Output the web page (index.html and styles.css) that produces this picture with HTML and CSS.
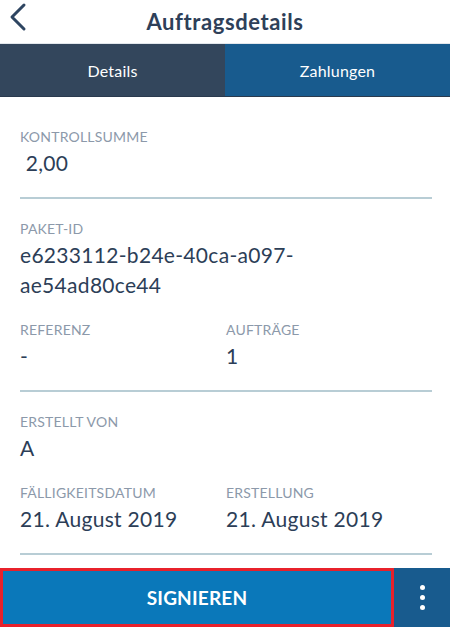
FILE: index.html
```html
<!DOCTYPE html>
<html lang="de">

<head>
    <meta charset="UTF-8">
    <title>Auftragsdetails</title>
    <link rel="stylesheet" href="styles.css">
</head>

<body>

    <div class="screen">

        <header class="topbar">
            <button class="back" aria-label="Zurück">
                <svg width="30" height="34" viewBox="0 0 30 34">
                    <path d="M24 5 L12 17 L24 29" fill="none" stroke="#2e4561" stroke-width="3"
                        stroke-linecap="round" stroke-linejoin="round" />
                </svg>
            </button>
            <h1>Auftragsdetails</h1>
        </header>

        <nav class="tabs">
            <div class="tab active">Details</div>
            <div class="tab">Zahlungen</div>
        </nav>

        <main class="content">

            <section class="section first">
                <div class="field">
                    <div class="label">Kontrollsumme</div>
                    <div class="value">&nbsp;2,00</div>
                </div>
            </section>

            <section class="section">
                <div class="grid">
                    <div class="field wide">
                        <div class="label">Paket-ID</div>
                        <div class="value">e6233112-b24e-40ca-a097-<br>ae54ad80ce44</div>
                    </div>
                    <div class="field">
                        <div class="label">Referenz</div>
                        <div class="value">-</div>
                    </div>
                    <div class="field">
                        <div class="label">Aufträge</div>
                        <div class="value">1</div>
                    </div>
                </div>
            </section>

            <section class="section">
                <div class="grid">
                    <div class="field wide">
                        <div class="label">Erstellt von</div>
                        <div class="value">A</div>
                    </div>
                    <div class="field">
                        <div class="label">Fälligkeitsdatum</div>
                        <div class="value">21. August 2019</div>
                    </div>
                    <div class="field">
                        <div class="label">Erstellung</div>
                        <div class="value">21. August 2019</div>
                    </div>
                </div>
            </section>

        </main>

        <footer class="actions">
            <button class="sign">SIGNIEREN</button>
            <button class="more" aria-label="Mehr">
                <span class="dot"></span>
                <span class="dot"></span>
                <span class="dot"></span>
            </button>
        </footer>

    </div>

</body>

</html>
```

FILE: styles.css
```css
* {
    box-sizing: border-box;
}

html,
body {
    margin: 0;
    height: 100%;
}

body {
    font-family: Lato, 'Noto Sans', sans-serif;
    background-color: #ffffff;
    color: #2c3e57;
}

.screen {
    display: flex;
    flex-direction: column;
    height: 100vh;
}

.topbar {
    position: relative;
    height: 44px;
    display: flex;
    align-items: center;
    justify-content: center;
    border-bottom: 1px solid #e3e7ec;
}

.topbar h1 {
    margin: 0;
    font-size: 22px;
    font-weight: 700;
    letter-spacing: 0.6px;
    color: #2e4059;
    line-height: 30px;
}

.back {
    position: absolute;
    left: 0;
    top: 0;
    padding: 0;
    border: none;
    background: none;
    cursor: pointer;
}

.back svg {
    display: block;
}

.tabs {
    display: flex;
    height: 53px;
    border-bottom: 1px solid #2a3a4e;
}

.tab {
    flex: 1;
    display: flex;
    align-items: center;
    justify-content: center;
    font-size: 16px;
    letter-spacing: 0.2px;
    color: #ffffff;
    background-color: #185b8e;
}

.tab.active {
    background-color: #33465c;
}

.content {
    flex: 1;
    overflow: hidden;
    padding: 0 18px 0 20px;
}

.section {
    padding: 21px 0 19px;
    border-bottom: 2px solid #b8cdd5;
}

.section.first {
    padding-top: 31px;
}

.grid {
    display: grid;
    grid-template-columns: 1fr 1fr;
    row-gap: 21px;
}

.field.wide {
    grid-column: 1 / -1;
}

.label {
    font-size: 14px;
    line-height: 18px;
    letter-spacing: 0.2px;
    text-transform: uppercase;
    color: #8c99aa;
    margin-bottom: 2px;
}

.value {
    font-size: 21px;
    line-height: 30px;
    letter-spacing: 0.3px;
    color: #2c3e57;
}

.actions {
    display: flex;
    height: 59px;
    flex-shrink: 0;
}

.sign {
    flex: 1;
    border: 3px solid #e8212b;
    background-color: #0a78ba;
    color: #ffffff;
    font-family: inherit;
    font-size: 19px;
    font-weight: 700;
    letter-spacing: 0.2px;
    cursor: pointer;
}

.more {
    width: 56px;
    border: none;
    background-color: #185b8e;
    display: flex;
    flex-direction: column;
    align-items: center;
    justify-content: center;
    gap: 5px;
    cursor: pointer;
}

.dot {
    width: 5px;
    height: 5px;
    border-radius: 50%;
    background-color: #ffffff;
}
```
